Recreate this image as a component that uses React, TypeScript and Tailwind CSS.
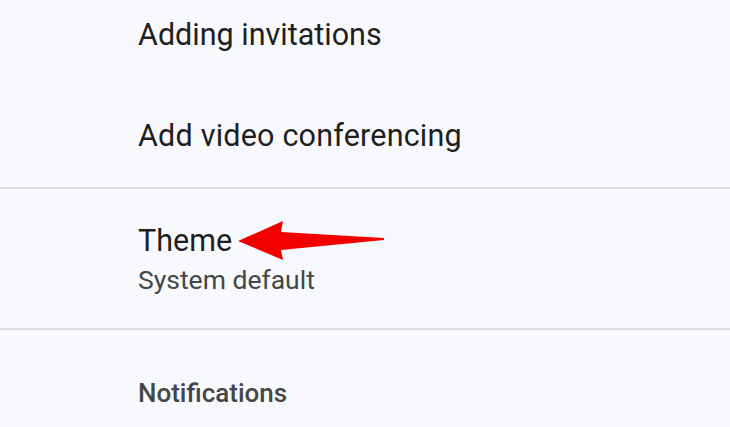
export default function App() {
  return (
    <div
      className="w-[730px] h-[427px] overflow-hidden bg-[#f8f9fd] text-[#1f1f1f]"
      style={{ fontFamily: 'Roboto, "Noto Sans", sans-serif' }}
    >
      {/* General rows */}
      <div className="h-[85px] pb-[15px] pl-[138px] flex items-center text-[30.5px]">
        Adding invitations
      </div>
      <div className="h-[102px] pl-[138px] flex items-center text-[30.5px] tracking-[0.2px]">
        Add video conferencing
      </div>
      <div className="h-[2px] bg-[#dcdcde]" />

      {/* Theme */}
      <div className="h-[139px] pl-[138px] pt-[2px] flex flex-col justify-center">
        <div className="flex items-center">
          <span className="text-[30.5px] leading-[40px]">Theme</span>
          <svg width="156" height="40" viewBox="0 0 156 40">
            <path d="M6 20 L51 0 L49 11 L152 17 L152 19 L49 29 L51 39 Z" fill="#f20000" />
          </svg>
        </div>
        <span className="text-[26.5px] leading-[38px] text-[#444746]">System default</span>
      </div>
      <div className="h-[2px] bg-[#dcdcde]" />

      {/* Notifications */}
      <div className="h-[96px] pl-[138px] flex items-center pt-[31px]">
        <span className="text-[26px] font-medium text-[#444746]">Notifications</span>
      </div>
    </div>
  );
}
